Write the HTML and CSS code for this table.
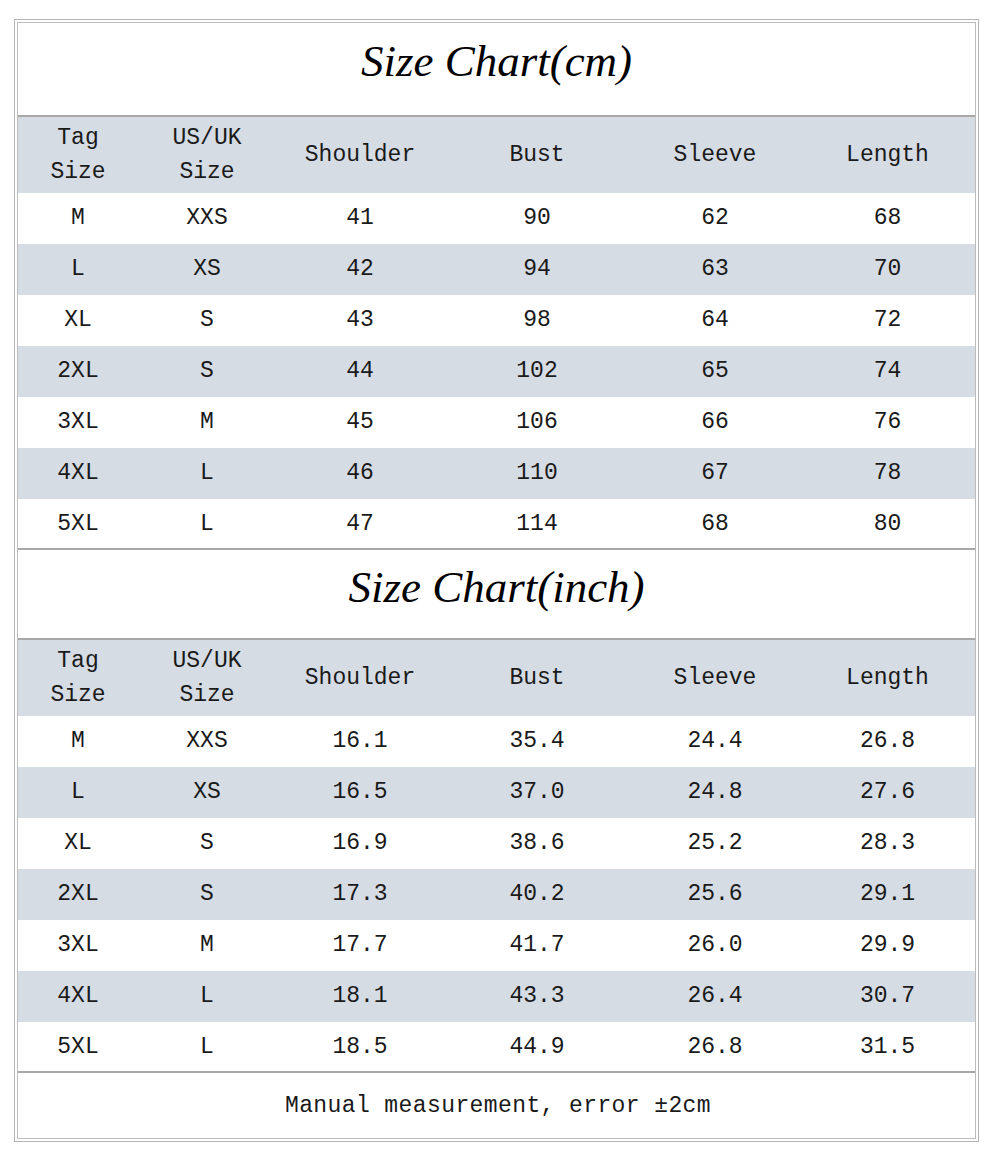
FILE: index.html
```html
<!DOCTYPE html>
<html>
<head>
<meta charset="utf-8">
<link rel="stylesheet" href="styles.css">
</head>
<body>
<div class="frame">
  <div class="inner">
    <div class="title t1">Size Chart(cm)</div>
    <div class="grid head">
      <div>Tag<br>Size</div><div>US/UK<br>Size</div><div>Shoulder</div><div>Bust</div><div>Sleeve</div><div>Length</div>
    </div>
    <div class="grid row"><div>M</div><div>XXS</div><div>41</div><div>90</div><div>62</div><div>68</div></div>
    <div class="grid row alt"><div>L</div><div>XS</div><div>42</div><div>94</div><div>63</div><div>70</div></div>
    <div class="grid row"><div>XL</div><div>S</div><div>43</div><div>98</div><div>64</div><div>72</div></div>
    <div class="grid row alt"><div>2XL</div><div>S</div><div>44</div><div>102</div><div>65</div><div>74</div></div>
    <div class="grid row"><div>3XL</div><div>M</div><div>45</div><div>106</div><div>66</div><div>76</div></div>
    <div class="grid row alt"><div>4XL</div><div>L</div><div>46</div><div>110</div><div>67</div><div>78</div></div>
    <div class="grid row last"><div>5XL</div><div>L</div><div>47</div><div>114</div><div>68</div><div>80</div></div>
    <div class="title t2">Size Chart(inch)</div>
    <div class="grid head">
      <div>Tag<br>Size</div><div>US/UK<br>Size</div><div>Shoulder</div><div>Bust</div><div>Sleeve</div><div>Length</div>
    </div>
    <div class="grid row"><div>M</div><div>XXS</div><div>16.1</div><div>35.4</div><div>24.4</div><div>26.8</div></div>
    <div class="grid row alt"><div>L</div><div>XS</div><div>16.5</div><div>37.0</div><div>24.8</div><div>27.6</div></div>
    <div class="grid row"><div>XL</div><div>S</div><div>16.9</div><div>38.6</div><div>25.2</div><div>28.3</div></div>
    <div class="grid row alt"><div>2XL</div><div>S</div><div>17.3</div><div>40.2</div><div>25.6</div><div>29.1</div></div>
    <div class="grid row"><div>3XL</div><div>M</div><div>17.7</div><div>41.7</div><div>26.0</div><div>29.9</div></div>
    <div class="grid row alt"><div>4XL</div><div>L</div><div>18.1</div><div>43.3</div><div>26.4</div><div>30.7</div></div>
    <div class="grid row last"><div>5XL</div><div>L</div><div>18.5</div><div>44.9</div><div>26.8</div><div>31.5</div></div>
    <div class="foot">Manual measurement, error ±2cm</div>
  </div>
</div>
</body>
</html>
```
FILE: styles.css
```css
html, body {
  margin: 0;
  padding: 0;
  background: #ffffff;
}
body {
  width: 1000px;
  height: 1156px;
  overflow: hidden;
}
.frame {
  margin: 19px 0 0 14px;
  border: 1px solid #b4b4b4;
  padding: 2px;
  box-sizing: content-box;
  width: 959px;
  height: 1117px;
}
.inner {
  border: 1px solid #bcbcbc;
  height: 1115px;
  display: flex;
  flex-direction: column;
  font-family: "Liberation Mono", "DejaVu Sans Mono", monospace;
  font-size: 23px;
  color: #1a1a1a;
}
.title {
  display: flex;
  align-items: center;
  justify-content: center;
  font-family: "Liberation Serif", serif;
  font-style: italic;
  font-size: 45px;
  color: #000000;
  border-bottom: 2px solid #a8a8a8;
}
.t1 {
  height: 76px;
  padding-bottom: 16px;
}
.t2 {
  height: 74px;
  padding-bottom: 14px;
}
.grid {
  display: grid;
  grid-template-columns: 120px 138px 168px 186px 170px 175px;
  align-items: center;
  text-align: center;
}
.head {
  height: 76px;
  background: #d6dce4;
  line-height: 34px;
}
.row {
  height: 51px;
  line-height: 51px;
  background: #ffffff;
}
.row.alt {
  background: #d6dce4;
}
.row.last {
  height: 49px;
  border-bottom: 2px solid #a8a8a8;
}
.foot {
  flex: 1;
  display: flex;
  align-items: center;
  justify-content: center;
  padding-left: 3px;
  letter-spacing: 0.4px;
}
```
